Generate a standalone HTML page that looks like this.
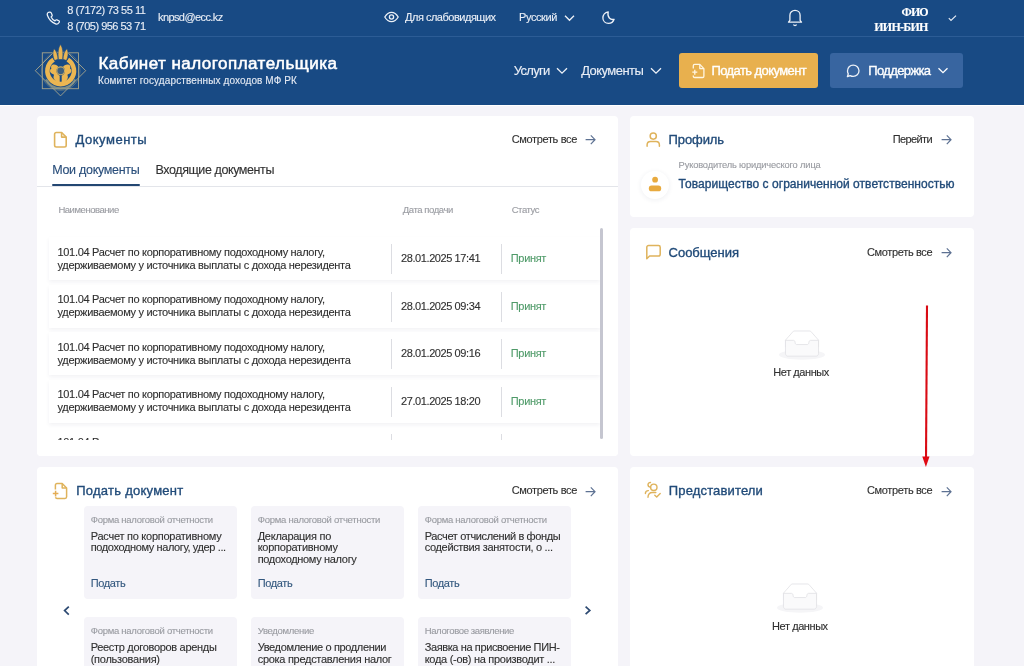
<!DOCTYPE html>
<html><head><meta charset="utf-8"><style>
html,body{margin:0;padding:0;width:1024px;height:666px;overflow:hidden;background:#f3f4f9;font-family:"Liberation Sans",sans-serif;}
.t{position:absolute;white-space:nowrap;-webkit-text-stroke:0.12px currentColor}
#wrap{position:absolute;left:0;top:0;width:1024px;height:666px;overflow:hidden;filter:blur(0.3px)}
</style></head><body><div id="wrap">
<div style="position:absolute;left:0;top:0;width:1024px;height:105px;background:#184a84"></div>
<div style="position:absolute;left:0;top:36px;width:1024px;height:1px;background:#2c5c95"></div>
<div style="position:absolute;left:0;top:105px;width:1024px;height:1px;background:#ffffff"></div>
<div style="position:absolute;left:679px;top:53px;width:139px;height:35px;background:#e8b04e;border-radius:3px"></div>
<div style="position:absolute;left:830px;top:53px;width:133px;height:35px;background:#3865a0;border-radius:3px"></div>
<div style="position:absolute;left:0;top:106px;width:1024px;height:560px;background:#f5f4f9"></div>
<div style="position:absolute;left:37px;top:116px;width:580.5px;height:340px;background:#fff;border-radius:4px"></div>
<div style="position:absolute;left:630px;top:116px;width:343.5px;height:101px;background:#fff;border-radius:4px"></div>
<div style="position:absolute;left:630px;top:228px;width:343.5px;height:228px;background:#fff;border-radius:4px"></div>
<div style="position:absolute;left:37px;top:467px;width:580.5px;height:220px;background:#fff;border-radius:4px"></div>
<div style="position:absolute;left:630px;top:467px;width:343.5px;height:220px;background:#fff;border-radius:4px"></div>
<div style="position:absolute;left:37px;top:186px;width:580.5px;height:1px;background:#e3e5ea"></div>
<div style="position:absolute;left:52px;top:184px;width:88px;height:2px;background:#234772;border-radius:1px"></div>
<div style="position:absolute;left:49px;top:237px;width:551px;height:43px;background:#fff;box-shadow:0 2px 4px rgba(30,40,80,0.06)"></div>
<div style="position:absolute;left:391px;top:244px;width:1px;height:30px;background:#dcdde2"></div>
<div style="position:absolute;left:501px;top:244px;width:1px;height:30px;background:#dcdde2"></div>
<div style="position:absolute;left:49px;top:284.5px;width:551px;height:43px;background:#fff;box-shadow:0 2px 4px rgba(30,40,80,0.06)"></div>
<div style="position:absolute;left:391px;top:291.5px;width:1px;height:30px;background:#dcdde2"></div>
<div style="position:absolute;left:501px;top:291.5px;width:1px;height:30px;background:#dcdde2"></div>
<div style="position:absolute;left:49px;top:332px;width:551px;height:43px;background:#fff;box-shadow:0 2px 4px rgba(30,40,80,0.06)"></div>
<div style="position:absolute;left:391px;top:339px;width:1px;height:30px;background:#dcdde2"></div>
<div style="position:absolute;left:501px;top:339px;width:1px;height:30px;background:#dcdde2"></div>
<div style="position:absolute;left:49px;top:379.5px;width:551px;height:43px;background:#fff;box-shadow:0 2px 4px rgba(30,40,80,0.06)"></div>
<div style="position:absolute;left:391px;top:386.5px;width:1px;height:30px;background:#dcdde2"></div>
<div style="position:absolute;left:501px;top:386.5px;width:1px;height:30px;background:#dcdde2"></div>
<div style="position:absolute;left:391px;top:434px;width:1px;height:30px;background:#dcdde2"></div>
<div style="position:absolute;left:501px;top:434px;width:1px;height:30px;background:#dcdde2"></div>
<div style="position:absolute;left:600px;top:228px;width:3px;height:211px;background:#c5c6d0;border-radius:2px"></div>
<div style="position:absolute;left:83.5px;top:505.5px;width:153px;height:93px;background:#f5f4f9;border-radius:4px"></div>
<div style="position:absolute;left:250.5px;top:505.5px;width:153px;height:93px;background:#f5f4f9;border-radius:4px"></div>
<div style="position:absolute;left:417.5px;top:505.5px;width:153px;height:93px;background:#f5f4f9;border-radius:4px"></div>
<div style="position:absolute;left:83.5px;top:617.4px;width:153px;height:93px;background:#f5f4f9;border-radius:4px"></div>
<div style="position:absolute;left:250.5px;top:617.4px;width:153px;height:93px;background:#f5f4f9;border-radius:4px"></div>
<div style="position:absolute;left:417.5px;top:617.4px;width:153px;height:93px;background:#f5f4f9;border-radius:4px"></div>
<span id="t0" class="t" style="left:67.30px;top:4.99px;font-family:'Liberation Sans';font-size:11px;line-height:11px;font-weight:400;color:#e9eef6;letter-spacing:-0.461px;">8 (7172) 73 55 11</span>
<span id="t1" class="t" style="left:67.30px;top:20.89px;font-family:'Liberation Sans';font-size:11px;line-height:11px;font-weight:400;color:#e9eef6;letter-spacing:-0.509px;">8 (705) 956 53 71</span>
<span id="t2" class="t" style="left:158.00px;top:12.19px;font-family:'Liberation Sans';font-size:11px;line-height:11px;font-weight:400;color:#e9eef6;letter-spacing:-0.592px;">knpsd@ecc.kz</span>
<span id="t3" class="t" style="left:405.00px;top:12.29px;font-family:'Liberation Sans';font-size:11px;line-height:11px;font-weight:400;color:#e9eef6;letter-spacing:-0.488px;">Для слабовидящих</span>
<span id="t4" class="t" style="left:519.00px;top:12.29px;font-family:'Liberation Sans';font-size:11px;line-height:11px;font-weight:400;color:#e9eef6;letter-spacing:-0.404px;">Русский</span>
<span id="t5" class="t" style="right:96.27px;top:5.95px;font-family:'Liberation Serif';font-size:12px;line-height:12px;font-weight:700;color:#ffffff;letter-spacing:-0.928px;">ФИО</span>
<span id="t6" class="t" style="right:96.44px;top:20.75px;font-family:'Liberation Serif';font-size:12px;line-height:12px;font-weight:700;color:#ffffff;letter-spacing:-0.758px;">ИИН-БИН</span>
<span id="t7" class="t" style="left:98.40px;top:54.61px;font-family:'Liberation Sans';font-size:17px;line-height:17px;font-weight:400;color:#ffffff;letter-spacing:0.468px;-webkit-text-stroke:0.55px #ffffff;">Кабинет налогоплательщика</span>
<span id="t8" class="t" style="left:98.00px;top:75.94px;font-family:'Liberation Sans';font-size:10px;line-height:10px;font-weight:400;color:#e3e9f3;letter-spacing:0.109px;">Комитет государственных доходов МФ РК</span>
<span id="t9" class="t" style="left:513.70px;top:63.90px;font-family:'Liberation Sans';font-size:13px;line-height:13px;font-weight:400;color:#e9eef6;letter-spacing:-0.664px;">Услуги</span>
<span id="t10" class="t" style="left:581.20px;top:63.90px;font-family:'Liberation Sans';font-size:13px;line-height:13px;font-weight:400;color:#e9eef6;letter-spacing:-0.557px;">Документы</span>
<span id="t11" class="t" style="left:711.50px;top:64.30px;font-family:'Liberation Sans';font-size:13px;line-height:13px;font-weight:400;color:#ffffff;letter-spacing:-0.585px;-webkit-text-stroke:0.35px #ffffff;">Подать документ</span>
<span id="t12" class="t" style="left:868.30px;top:64.30px;font-family:'Liberation Sans';font-size:13px;line-height:13px;font-weight:400;color:#ffffff;letter-spacing:-0.636px;-webkit-text-stroke:0.35px #ffffff;">Поддержка</span>
<span id="t13" class="t" style="left:75.50px;top:133.00px;font-family:'Liberation Sans';font-size:13px;line-height:13px;font-weight:400;color:#214b79;letter-spacing:0.520px;-webkit-text-stroke:0.35px #214b79;">Документы</span>
<span id="t14" class="t" style="left:511.70px;top:133.69px;font-family:'Liberation Sans';font-size:11px;line-height:11px;font-weight:400;color:#303030;letter-spacing:-0.347px;">Смотреть все</span>
<span id="t15" class="t" style="left:52.20px;top:164.02px;font-family:'Liberation Sans';font-size:12.5px;line-height:12.5px;font-weight:400;color:#284d7a;letter-spacing:-0.292px;">Мои документы</span>
<span id="t16" class="t" style="left:155.50px;top:164.02px;font-family:'Liberation Sans';font-size:12.5px;line-height:12.5px;font-weight:400;color:#303030;letter-spacing:-0.410px;">Входящие документы</span>
<span id="t17" class="t" style="left:58.40px;top:205.16px;font-family:'Liberation Sans';font-size:9.5px;line-height:9.5px;font-weight:400;color:#9a9ca2;letter-spacing:-0.455px;">Наименование</span>
<span id="t18" class="t" style="left:402.70px;top:205.16px;font-family:'Liberation Sans';font-size:9.5px;line-height:9.5px;font-weight:400;color:#9a9ca2;letter-spacing:-0.407px;">Дата подачи</span>
<span id="t19" class="t" style="left:511.70px;top:205.16px;font-family:'Liberation Sans';font-size:9.5px;line-height:9.5px;font-weight:400;color:#9a9ca2;letter-spacing:-0.455px;">Статус</span>
<span id="t20" class="t" style="left:57.50px;top:246.69px;font-family:'Liberation Sans';font-size:11px;line-height:11px;font-weight:400;color:#303030;letter-spacing:-0.315px;">101.04 Расчет по корпоративному подоходному налогу,</span>
<span id="t21" class="t" style="left:57.50px;top:259.89px;font-family:'Liberation Sans';font-size:11px;line-height:11px;font-weight:400;color:#303030;letter-spacing:-0.299px;">удерживаемому у источника выплаты с дохода нерезидента</span>
<span id="t22" class="t" style="left:401.00px;top:253.19px;font-family:'Liberation Sans';font-size:11px;line-height:11px;font-weight:400;color:#303030;letter-spacing:-0.409px;">28.01.2025 17:41</span>
<span id="t23" class="t" style="left:510.80px;top:253.19px;font-family:'Liberation Sans';font-size:11px;line-height:11px;font-weight:400;color:#4f9b69;letter-spacing:-0.342px;">Принят</span>
<span id="t24" class="t" style="left:57.50px;top:294.19px;font-family:'Liberation Sans';font-size:11px;line-height:11px;font-weight:400;color:#303030;letter-spacing:-0.315px;">101.04 Расчет по корпоративному подоходному налогу,</span>
<span id="t25" class="t" style="left:57.50px;top:307.39px;font-family:'Liberation Sans';font-size:11px;line-height:11px;font-weight:400;color:#303030;letter-spacing:-0.299px;">удерживаемому у источника выплаты с дохода нерезидента</span>
<span id="t26" class="t" style="left:401.00px;top:300.69px;font-family:'Liberation Sans';font-size:11px;line-height:11px;font-weight:400;color:#303030;letter-spacing:-0.409px;">28.01.2025 09:34</span>
<span id="t27" class="t" style="left:510.80px;top:300.69px;font-family:'Liberation Sans';font-size:11px;line-height:11px;font-weight:400;color:#4f9b69;letter-spacing:-0.342px;">Принят</span>
<span id="t28" class="t" style="left:57.50px;top:341.69px;font-family:'Liberation Sans';font-size:11px;line-height:11px;font-weight:400;color:#303030;letter-spacing:-0.315px;">101.04 Расчет по корпоративному подоходному налогу,</span>
<span id="t29" class="t" style="left:57.50px;top:354.89px;font-family:'Liberation Sans';font-size:11px;line-height:11px;font-weight:400;color:#303030;letter-spacing:-0.299px;">удерживаемому у источника выплаты с дохода нерезидента</span>
<span id="t30" class="t" style="left:401.00px;top:348.19px;font-family:'Liberation Sans';font-size:11px;line-height:11px;font-weight:400;color:#303030;letter-spacing:-0.409px;">28.01.2025 09:16</span>
<span id="t31" class="t" style="left:510.80px;top:348.19px;font-family:'Liberation Sans';font-size:11px;line-height:11px;font-weight:400;color:#4f9b69;letter-spacing:-0.342px;">Принят</span>
<span id="t32" class="t" style="left:57.50px;top:389.19px;font-family:'Liberation Sans';font-size:11px;line-height:11px;font-weight:400;color:#303030;letter-spacing:-0.315px;">101.04 Расчет по корпоративному подоходному налогу,</span>
<span id="t33" class="t" style="left:57.50px;top:402.39px;font-family:'Liberation Sans';font-size:11px;line-height:11px;font-weight:400;color:#303030;letter-spacing:-0.299px;">удерживаемому у источника выплаты с дохода нерезидента</span>
<span id="t34" class="t" style="left:401.00px;top:395.69px;font-family:'Liberation Sans';font-size:11px;line-height:11px;font-weight:400;color:#303030;letter-spacing:-0.409px;">27.01.2025 18:20</span>
<span id="t35" class="t" style="left:510.80px;top:395.69px;font-family:'Liberation Sans';font-size:11px;line-height:11px;font-weight:400;color:#4f9b69;letter-spacing:-0.342px;">Принят</span>
<span id="t36" class="t" style="left:57.50px;top:436.69px;font-family:'Liberation Sans';font-size:11px;line-height:11px;font-weight:400;color:#303030;letter-spacing:-0.315px;">101.04 Расчет по корпоративному подоходному налогу,</span>
<span id="t37" class="t" style="left:57.50px;top:449.89px;font-family:'Liberation Sans';font-size:11px;line-height:11px;font-weight:400;color:#303030;letter-spacing:-0.299px;">удерживаемому у источника выплаты с дохода нерезидента</span>
<span id="t38" class="t" style="left:401.00px;top:443.19px;font-family:'Liberation Sans';font-size:11px;line-height:11px;font-weight:400;color:#303030;letter-spacing:-0.409px;">27.01.2025 18:20</span>
<span id="t39" class="t" style="left:510.80px;top:443.19px;font-family:'Liberation Sans';font-size:11px;line-height:11px;font-weight:400;color:#4f9b69;letter-spacing:-0.342px;">Принят</span>
<span id="t40" class="t" style="left:668.60px;top:132.80px;font-family:'Liberation Sans';font-size:13px;line-height:13px;font-weight:400;color:#214b79;letter-spacing:-0.104px;-webkit-text-stroke:0.35px #214b79;">Профиль</span>
<span id="t41" class="t" style="left:892.80px;top:134.19px;font-family:'Liberation Sans';font-size:11px;line-height:11px;font-weight:400;color:#303030;letter-spacing:-0.628px;">Перейти</span>
<span id="t42" class="t" style="left:678.60px;top:161.13px;font-family:'Liberation Sans';font-size:9.3px;line-height:9.3px;font-weight:400;color:#999ba1;letter-spacing:-0.150px;">Руководитель юридического лица</span>
<span id="t43" class="t" style="left:678.60px;top:178.04px;font-family:'Liberation Sans';font-size:12px;line-height:12px;font-weight:400;color:#214b79;letter-spacing:0.038px;-webkit-text-stroke:0.35px #214b79;">Товарищество с ограниченной ответственностью</span>
<span id="t44" class="t" style="left:668.60px;top:245.60px;font-family:'Liberation Sans';font-size:13px;line-height:13px;font-weight:400;color:#214b79;letter-spacing:-0.029px;-webkit-text-stroke:0.35px #214b79;">Сообщения</span>
<span id="t45" class="t" style="left:867.00px;top:246.99px;font-family:'Liberation Sans';font-size:11px;line-height:11px;font-weight:400;color:#303030;letter-spacing:-0.347px;">Смотреть все</span>
<span id="t46" class="t" style="left:773.30px;top:367.39px;font-family:'Liberation Sans';font-size:11px;line-height:11px;font-weight:400;color:#303030;letter-spacing:-0.429px;">Нет данных</span>
<span id="t47" class="t" style="left:76.20px;top:484.20px;font-family:'Liberation Sans';font-size:13px;line-height:13px;font-weight:400;color:#214b79;letter-spacing:0.255px;-webkit-text-stroke:0.35px #214b79;">Подать документ</span>
<span id="t48" class="t" style="left:511.70px;top:485.19px;font-family:'Liberation Sans';font-size:11px;line-height:11px;font-weight:400;color:#303030;letter-spacing:-0.347px;">Смотреть все</span>
<span id="t49" class="t" style="left:668.80px;top:484.20px;font-family:'Liberation Sans';font-size:13px;line-height:13px;font-weight:400;color:#214b79;letter-spacing:0.149px;-webkit-text-stroke:0.35px #214b79;">Представители</span>
<span id="t50" class="t" style="left:867.00px;top:485.19px;font-family:'Liberation Sans';font-size:11px;line-height:11px;font-weight:400;color:#303030;letter-spacing:-0.347px;">Смотреть все</span>
<span id="t51" class="t" style="left:772.10px;top:620.89px;font-family:'Liberation Sans';font-size:11px;line-height:11px;font-weight:400;color:#303030;letter-spacing:-0.429px;">Нет данных</span>
<span id="t52" class="t" style="left:90.70px;top:514.76px;font-family:'Liberation Sans';font-size:9.5px;line-height:9.5px;font-weight:400;color:#999ba1;letter-spacing:-0.264px;">Форма налоговой отчетности</span>
<span id="t53" class="t" style="left:90.70px;top:530.79px;font-family:'Liberation Sans';font-size:11px;line-height:11px;font-weight:400;color:#303030;letter-spacing:-0.251px;">Расчет по корпоративному</span>
<span id="t54" class="t" style="left:90.70px;top:542.24px;font-family:'Liberation Sans';font-size:11px;line-height:11px;font-weight:400;color:#303030;letter-spacing:-0.380px;">подоходному налогу, удер ...</span>
<span id="t55" class="t" style="left:90.70px;top:577.69px;font-family:'Liberation Sans';font-size:11px;line-height:11px;font-weight:400;color:#34587f;letter-spacing:-0.377px;">Подать</span>
<span id="t56" class="t" style="left:257.70px;top:514.76px;font-family:'Liberation Sans';font-size:9.5px;line-height:9.5px;font-weight:400;color:#999ba1;letter-spacing:-0.256px;">Форма налоговой отчетности</span>
<span id="t57" class="t" style="left:257.70px;top:530.79px;font-family:'Liberation Sans';font-size:11px;line-height:11px;font-weight:400;color:#303030;letter-spacing:-0.270px;">Декларация по</span>
<span id="t58" class="t" style="left:257.70px;top:542.24px;font-family:'Liberation Sans';font-size:11px;line-height:11px;font-weight:400;color:#303030;letter-spacing:-0.261px;">корпоративному</span>
<span id="t59" class="t" style="left:257.70px;top:553.69px;font-family:'Liberation Sans';font-size:11px;line-height:11px;font-weight:400;color:#303030;letter-spacing:-0.329px;">подоходному налогу</span>
<span id="t60" class="t" style="left:257.70px;top:577.69px;font-family:'Liberation Sans';font-size:11px;line-height:11px;font-weight:400;color:#34587f;letter-spacing:-0.377px;">Подать</span>
<span id="t61" class="t" style="left:424.70px;top:514.76px;font-family:'Liberation Sans';font-size:9.5px;line-height:9.5px;font-weight:400;color:#999ba1;letter-spacing:-0.264px;">Форма налоговой отчетности</span>
<span id="t62" class="t" style="left:424.70px;top:530.79px;font-family:'Liberation Sans';font-size:11px;line-height:11px;font-weight:400;color:#303030;letter-spacing:-0.363px;">Расчет отчислений в фонды</span>
<span id="t63" class="t" style="left:424.70px;top:542.24px;font-family:'Liberation Sans';font-size:11px;line-height:11px;font-weight:400;color:#303030;letter-spacing:-0.337px;">содействия занятости, о ...</span>
<span id="t64" class="t" style="left:424.70px;top:577.69px;font-family:'Liberation Sans';font-size:11px;line-height:11px;font-weight:400;color:#34587f;letter-spacing:-0.377px;">Подать</span>
<span id="t65" class="t" style="left:90.70px;top:626.16px;font-family:'Liberation Sans';font-size:9.5px;line-height:9.5px;font-weight:400;color:#999ba1;letter-spacing:-0.264px;">Форма налоговой отчетности</span>
<span id="t66" class="t" style="left:90.70px;top:642.19px;font-family:'Liberation Sans';font-size:11px;line-height:11px;font-weight:400;color:#303030;letter-spacing:-0.311px;">Реестр договоров аренды</span>
<span id="t67" class="t" style="left:90.70px;top:653.64px;font-family:'Liberation Sans';font-size:11px;line-height:11px;font-weight:400;color:#303030;letter-spacing:-0.251px;">(пользования)</span>
<span id="t68" class="t" style="left:257.70px;top:626.16px;font-family:'Liberation Sans';font-size:9.5px;line-height:9.5px;font-weight:400;color:#999ba1;letter-spacing:-0.304px;">Уведомление</span>
<span id="t69" class="t" style="left:257.70px;top:642.19px;font-family:'Liberation Sans';font-size:11px;line-height:11px;font-weight:400;color:#303030;letter-spacing:-0.354px;">Уведомление о продлении</span>
<span id="t70" class="t" style="left:257.70px;top:653.64px;font-family:'Liberation Sans';font-size:11px;line-height:11px;font-weight:400;color:#303030;letter-spacing:-0.288px;">срока представления налог</span>
<span id="t71" class="t" style="left:424.70px;top:626.16px;font-family:'Liberation Sans';font-size:9.5px;line-height:9.5px;font-weight:400;color:#999ba1;letter-spacing:-0.360px;">Налоговое заявление</span>
<span id="t72" class="t" style="left:424.70px;top:642.19px;font-family:'Liberation Sans';font-size:11px;line-height:11px;font-weight:400;color:#303030;letter-spacing:-0.389px;">Заявка на присвоение ПИН-</span>
<span id="t73" class="t" style="left:424.70px;top:653.64px;font-family:'Liberation Sans';font-size:11px;line-height:11px;font-weight:400;color:#303030;letter-spacing:-0.288px;">кода (-ов) на производит ...</span>
<div style="position:absolute;left:37px;top:440px;width:580.5px;height:16px;background:#fff;border-radius:0 0 4px 4px"></div>
<div style="position:absolute;left:37px;top:456px;width:580.5px;height:11px;background:#f5f4f9"></div>
<!-- phone -->
<svg style="position:absolute;left:46px;top:11px" width="15" height="15" viewBox="0 0 15 15"><path d="M2.6 1.3 C1.6 1.8 0.9 2.7 1.4 4.2 C2.6 7.8 5.6 11.2 9.6 12.9 C11.1 13.5 12.3 12.8 12.9 11.8 L13.3 11.1 C13.5 10.6 13.3 10.1 12.8 9.8 L10.9 8.9 C10.4 8.7 9.9 8.8 9.6 9.2 L9.0 9.9 C7.3 9.1 5.9 7.6 5.1 5.9 L5.8 5.3 C6.2 5.0 6.3 4.5 6.1 4.0 L5.3 2.0 C5.0 1.4 4.4 1.0 3.8 1.0 Z" fill="none" stroke="#eef2f8" stroke-width="1.25" stroke-linejoin="round"/></svg>
<!-- logo -->
<svg style="position:absolute;left:30px;top:40px" width="62" height="62" viewBox="30 40 62 62">
  <g fill="none" stroke="#a6a58c" stroke-width="0.9">
    <rect x="42.3" y="52.8" width="36.2" height="35.9"/>
    <path d="M54 52 L35.3 70.7 L60.5 95.9 L85.7 70.7 L67 52"/>
    <circle cx="60.7" cy="71" r="19.3" stroke-width="0.7" opacity="0.6"/>
  </g>
  <path d="M46 79.5 A16.6 16.6 0 0 0 75.4 79.5" fill="none" stroke="#8f9a88" stroke-width="2.2" opacity="0.85"/>
  <path d="M53.6 59.6 A13.3 13.3 0 1 0 67.8 59.6" fill="none" stroke="#ebb652" stroke-width="4.6"/>
  <g fill="#ebb652" stroke="#184a84" stroke-width="0.6">
    <path d="M60.5 44.6 C58.3 47.5 57.7 52.5 58.3 59.5 L62.7 59.5 C63.3 52.5 62.7 47.5 60.5 44.6 Z"/>
    <path d="M54.2 48.8 C52.5 51.5 52.4 56 54.6 60.6 L58 59.2 C57.8 55.2 56.6 51.2 54.2 48.8 Z"/>
    <path d="M66.8 48.8 C68.5 51.5 68.6 56 66.4 60.6 L63 59.2 C63.2 55.2 64.4 51.2 66.8 48.8 Z"/>
  </g>
  <g fill="#ebb652">
    <path d="M53.2 64.5 C51.2 64.9 50.6 67 51.4 68.4 C49.9 69 49.5 71.4 50.8 72.8 C52 74 53.6 73.9 54 75 C53.3 76.6 53.2 78.2 54.5 79.7 C56 81.4 57.6 83 58.8 84.6 L59.7 84.6 L59.7 75.8 C57.4 74.8 56.1 72.3 56.5 70 C56.9 68.4 57.7 67.4 58.4 67 C57.5 65.3 55.4 64.1 53.2 64.5 Z"/>
    <path d="M68.2 64.5 C70.2 64.9 70.8 67 70 68.4 C71.5 69 71.9 71.4 70.6 72.8 C69.4 74 67.8 73.9 67.4 75 C68.1 76.6 68.2 78.2 66.9 79.7 C65.4 81.4 63.8 83 62.6 84.6 L61.7 84.6 L61.7 75.8 C64 74.8 65.3 72.3 64.9 70 C64.5 68.4 63.7 67.4 63 67 C63.9 65.3 66 64.1 68.2 64.5 Z"/>
  </g>
  <circle cx="60.7" cy="70.8" r="3.9" fill="#3e5f7e" stroke="#c9ab62" stroke-width="1.1"/>
</svg>
<!-- eye -->
<svg style="position:absolute;left:383px;top:10px" width="17" height="14" viewBox="0 0 17 14"><path d="M1.8 7 C3.8 3.6 6.2 2.3 8.5 2.3 C10.8 2.3 13.2 3.6 15.2 7 C13.2 10.4 10.8 11.7 8.5 11.7 C6.2 11.7 3.8 10.4 1.8 7 Z" fill="none" stroke="#eef2f8" stroke-width="1.3"/><circle cx="8.5" cy="7" r="2.1" fill="none" stroke="#eef2f8" stroke-width="1.3"/></svg>
<!-- chevron lang -->
<svg style="position:absolute;left:563px;top:13px" width="13" height="10" viewBox="0 0 13 10"><path d="M2 2.8 L6.5 7.3 L11 2.8" fill="none" stroke="#eef2f8" stroke-width="1.3"/></svg>
<!-- moon -->
<svg style="position:absolute;left:601px;top:10px" width="15" height="15" viewBox="0 0 15 15"><path d="M7.2 1.8 C4 2.3 1.9 5 1.9 8 C1.9 11.2 4.4 13.4 7.5 13.4 C10.1 13.4 12.3 11.7 13.1 9.3 C9.4 10.3 6 7.2 7.2 1.8 Z" fill="none" stroke="#eef2f8" stroke-width="1.3" stroke-linejoin="round"/></svg>
<!-- bell -->
<svg style="position:absolute;left:786px;top:9px" width="18" height="18" viewBox="0 0 18 18"><path d="M2.5 13.2 L15.5 13.2 L14.1 11.4 L14.1 6.2 C14.1 3.4 11.9 1.4 9 1.4 C6.1 1.4 3.9 3.4 3.9 6.2 L3.9 11.4 Z" fill="none" stroke="#eef2f8" stroke-width="1.3" stroke-linejoin="round"/><path d="M7.3 15.6 C8.2 16.5 9.8 16.5 10.7 15.6" fill="none" stroke="#eef2f8" stroke-width="1.3"/></svg>
<!-- check -->
<svg style="position:absolute;left:947px;top:14px" width="11" height="8" viewBox="0 0 11 8"><path d="M1.8 4.2 L4 6.4 L9 1.6" fill="none" stroke="#e6ecf5" stroke-width="1.2"/></svg>
<!-- nav chevrons -->
<svg style="position:absolute;left:555px;top:65px" width="14" height="11" viewBox="0 0 14 11"><path d="M2 3.2 L7 8.2 L12 3.2" fill="none" stroke="#eef2f8" stroke-width="1.3"/></svg>
<svg style="position:absolute;left:649px;top:65px" width="14" height="11" viewBox="0 0 14 11"><path d="M2 3.2 L7 8.2 L12 3.2" fill="none" stroke="#eef2f8" stroke-width="1.3"/></svg>
<svg style="position:absolute;left:936px;top:65px" width="14" height="11" viewBox="0 0 14 11"><path d="M2.5 3.2 L7 7.7 L11.5 3.2" fill="none" stroke="#ffffff" stroke-width="1.3"/></svg>
<!-- button doc+ -->
<svg style="position:absolute;left:690px;top:62px" width="16" height="17" viewBox="0 0 16 17"><path d="M3.3 6.5 L3.3 3.8 C3.3 3 3.9 2.4 4.7 2.4 L9.8 2.4 L13.9 6.6 L13.9 14.3 C13.9 15 13.3 15.5 12.6 15.5 L4.7 15.5 C3.9 15.5 3.3 15 3.3 14.3 L3.3 13.6" fill="none" stroke="#fff6e2" stroke-width="1.3" stroke-linejoin="round"/><path d="M9.8 2.4 L9.8 6.6 L13.9 6.6" fill="none" stroke="#fff6e2" stroke-width="1.3" stroke-linejoin="round"/><path d="M2.3 10.2 L7.3 10.2 M4.8 7.7 L4.8 12.7" stroke="#fff6e2" stroke-width="1.3"/></svg>
<!-- chat -->
<svg style="position:absolute;left:845px;top:63px" width="16" height="16" viewBox="0 0 16 16"><path d="M2.4 13.7 L3.3 10.8 C2.8 10 2.5 9.1 2.5 8 C2.5 4.6 5 2.1 8.2 2.1 C11.4 2.1 14 4.6 14 7.8 C14 11 11.4 13.4 8.2 13.4 C7.1 13.4 6.1 13.1 5.2 12.6 Z" fill="none" stroke="#eef2f8" stroke-width="1.3" stroke-linejoin="round"/></svg>

<!-- documents card icon -->
<svg style="position:absolute;left:52px;top:130px" width="17" height="19" viewBox="0 0 17 19"><path d="M4.3 2.5 L9.6 2.5 L14.2 7.1 L14.2 15.3 C14.2 16.3 13.4 17 12.5 17 L4.3 17 C3.3 17 2.6 16.3 2.6 15.3 L2.6 4.2 C2.6 3.2 3.3 2.5 4.3 2.5 Z" fill="none" stroke="#dfb35c" stroke-width="1.6" stroke-linejoin="round"/><path d="M9.6 2.5 L9.6 7.1 L14.2 7.1" fill="none" stroke="#dfb35c" stroke-width="1.6" stroke-linejoin="round"/></svg>
<!-- arrows -->
<svg style="position:absolute;left:584px;top:133px" width="13" height="13" viewBox="0 0 13 13"><path d="M1.6 6.7 L11 6.7 M6.8 2.3 L11 6.7 L6.8 11.1" fill="none" stroke="#5d7192" stroke-width="1.2"/></svg>
<svg style="position:absolute;left:939.5px;top:133px" width="13" height="13" viewBox="0 0 13 13"><path d="M1.6 6.7 L11 6.7 M6.8 2.3 L11 6.7 L6.8 11.1" fill="none" stroke="#5d7192" stroke-width="1.2"/></svg>
<svg style="position:absolute;left:939.5px;top:245.5px" width="13" height="13" viewBox="0 0 13 13"><path d="M1.6 6.7 L11 6.7 M6.8 2.3 L11 6.7 L6.8 11.1" fill="none" stroke="#5d7192" stroke-width="1.2"/></svg>
<svg style="position:absolute;left:584px;top:484.5px" width="13" height="13" viewBox="0 0 13 13"><path d="M1.6 6.7 L11 6.7 M6.8 2.3 L11 6.7 L6.8 11.1" fill="none" stroke="#5d7192" stroke-width="1.2"/></svg>
<svg style="position:absolute;left:939.5px;top:484.5px" width="13" height="13" viewBox="0 0 13 13"><path d="M1.6 6.7 L11 6.7 M6.8 2.3 L11 6.7 L6.8 11.1" fill="none" stroke="#5d7192" stroke-width="1.2"/></svg>
<!-- profile icon -->
<svg style="position:absolute;left:644px;top:130px" width="18" height="19" viewBox="0 0 18 19"><circle cx="9.25" cy="6.1" r="3.1" fill="none" stroke="#dfb35c" stroke-width="1.5"/><path d="M3.1 16.3 L3.1 15 C3.1 12.5 4.6 11.5 6.5 11.5 L12 11.5 C13.9 11.5 15.4 12.5 15.4 15 L15.4 16.3" fill="none" stroke="#dfb35c" stroke-width="1.5" stroke-linecap="round"/></svg>
<!-- avatar -->
<div style="position:absolute;left:641px;top:171px;width:28px;height:28px;border-radius:50%;background:#fff;box-shadow:0 1px 5px rgba(40,50,90,0.08)"></div>
<svg style="position:absolute;left:645px;top:175px" width="20" height="20" viewBox="0 0 20 20"><circle cx="10.1" cy="4.7" r="2.9" fill="#e8aa3e"/><rect x="3.8" y="10.6" width="12.4" height="5.7" rx="2.85" fill="#e8aa3e"/></svg>
<!-- message icon -->
<svg style="position:absolute;left:644px;top:243px" width="18" height="19" viewBox="0 0 18 19"><path d="M2.8 15.8 L2.8 4.3 C2.8 3.2 3.6 2.6 4.6 2.6 L14.5 2.6 C15.5 2.6 16.2 3.3 16.2 4.3 L16.2 11.2 C16.2 12.2 15.5 13 14.5 13 L5.6 13 Z" fill="none" stroke="#dfb35c" stroke-width="1.5" stroke-linejoin="round"/></svg>
<!-- submit doc icon -->
<svg style="position:absolute;left:51px;top:481px" width="18" height="20" viewBox="0 0 18 20"><path d="M4.4 8.5 L4.4 4.2 C4.4 3.2 5.1 2.6 6 2.6 L11.2 2.6 L15.6 7.1 L15.6 15.8 C15.6 16.8 14.9 17.4 14 17.4 L6 17.4 C5.3 17.4 4.7 17 4.5 16.3" fill="none" stroke="#dfb35c" stroke-width="1.5" stroke-linejoin="round"/><path d="M11.2 2.6 L11.2 7.1 L15.6 7.1" fill="none" stroke="#dfb35c" stroke-width="1.5" stroke-linejoin="round"/><path d="M1.8 12.6 L7.4 12.6 M4.6 9.8 L4.6 15.4" stroke="#e4ad55" stroke-width="1.5"/></svg>
<!-- representatives icon -->
<svg style="position:absolute;left:643px;top:481px" width="20" height="19" viewBox="0 0 20 19"><circle cx="10.8" cy="6.3" r="3.2" fill="none" stroke="#dfb35c" stroke-width="1.4"/><path d="M7.6 6.3 C6 6.2 5 5 5 3.6 C5 2.2 6.2 1.4 7.5 1.5" fill="none" stroke="#dfb35c" stroke-width="1.4" stroke-linecap="round"/><path d="M2.4 12.5 C2.4 10.6 3.8 9.6 5.4 9.6" fill="none" stroke="#dfb35c" stroke-width="1.4" stroke-linecap="round"/><path d="M5 16.2 C5 13.3 6.8 11.5 9.2 11.5 L12.8 11.5" fill="none" stroke="#dfb35c" stroke-width="1.4" stroke-linecap="round"/><path d="M11.8 14.3 L13.7 16.1 L17.2 12.6" fill="none" stroke="#dfb35c" stroke-width="1.4" stroke-linecap="round" stroke-linejoin="round"/></svg>
<!-- empty states -->
<svg style="position:absolute;left:778.5px;top:330px" width="46" height="30" viewBox="0 0 64 41"><g transform="translate(0 1)" fill="none" fill-rule="evenodd"><ellipse fill="#f5f5f7" cx="32" cy="33" rx="32" ry="7"/><g fill-rule="nonzero" stroke="#dedee2"><path d="M55 12.76L44.854 1.258C44.367.474 43.656 0 42.907 0H21.093c-.749 0-1.46.474-1.947 1.257L9 12.761V22h46v-9.24z"/><path d="M41.613 15.931c0-1.605.994-2.93 2.227-2.931H55v18.137C55 33.26 53.68 35 52.05 35h-40.1C10.32 35 9 33.259 9 31.137V13h11.16c1.233 0 2.227 1.323 2.227 2.928v.022c0 1.605 1.005 2.901 2.237 2.901h14.752c1.232 0 2.237-1.308 2.237-2.913v-.007z" fill="#fafafb"/></g></g></svg>
<svg style="position:absolute;left:776.5px;top:583px" width="46" height="30" viewBox="0 0 64 41"><g transform="translate(0 1)" fill="none" fill-rule="evenodd"><ellipse fill="#f5f5f7" cx="32" cy="33" rx="32" ry="7"/><g fill-rule="nonzero" stroke="#dedee2"><path d="M55 12.76L44.854 1.258C44.367.474 43.656 0 42.907 0H21.093c-.749 0-1.46.474-1.947 1.257L9 12.761V22h46v-9.24z"/><path d="M41.613 15.931c0-1.605.994-2.93 2.227-2.931H55v18.137C55 33.26 53.68 35 52.05 35h-40.1C10.32 35 9 33.259 9 31.137V13h11.16c1.233 0 2.227 1.323 2.227 2.928v.022c0 1.605 1.005 2.901 2.237 2.901h14.752c1.232 0 2.237-1.308 2.237-2.913v-.007z" fill="#fafafb"/></g></g></svg>
<!-- carousel chevrons -->
<svg style="position:absolute;left:61px;top:604px" width="11" height="13" viewBox="0 0 11 13"><path d="M7.8 2.6 L3.6 6.6 L7.8 10.6" fill="none" stroke="#2d4a72" stroke-width="1.7"/></svg>
<svg style="position:absolute;left:582px;top:604px" width="11" height="13" viewBox="0 0 11 13"><path d="M3.6 2.6 L7.8 6.4 L3.6 10.2" fill="none" stroke="#2d4a72" stroke-width="1.7"/></svg>
<!-- red arrow -->
<svg style="position:absolute;left:915px;top:300px" width="24" height="172" viewBox="915 300 24 172"><path d="M927 305.5 L926 459" stroke="#d90b14" stroke-width="2.1"/><path d="M922.3 456.5 L929.5 456.5 L925.9 467 Z" fill="#e00812"/></svg>

</div></body></html>
